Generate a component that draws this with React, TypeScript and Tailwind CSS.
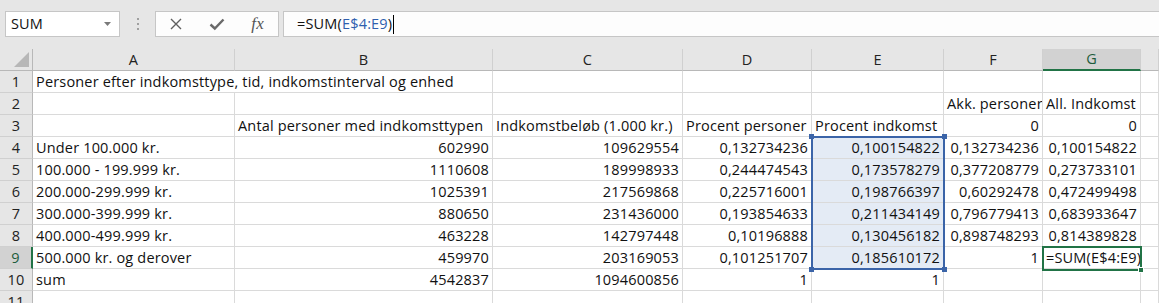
import React from "react";

type C = { t?: string; r?: boolean; span?: number; sel?: boolean; cls?: string };

const title = "Personer efter indkomsttype, tid, indkomstinterval og enhed";

const rows: C[][] = [
  [{ t: title, span: 2 }, {}, {}, {}, {}, {}, {}],
  [{}, {}, {}, {}, {}, { t: "Akk. personer" }, { t: "All. Indkomst" }, {}],
  [
    {},
    { t: "Antal personer med indkomsttypen" },
    { t: "Indkomstbeløb (1.000 kr.)" },
    { t: "Procent personer" },
    { t: "Procent indkomst" },
    { t: "0", r: true },
    { t: "0", r: true },
    {},
  ],
  [
    { t: "Under 100.000 kr." },
    { t: "602990", r: true },
    { t: "109629554", r: true },
    { t: "0,132734236", r: true },
    { t: "0,100154822", r: true, sel: true },
    { t: "0,132734236", r: true },
    { t: "0,100154822", r: true },
    {},
  ],
  [
    { t: "100.000 - 199.999 kr." },
    { t: "1110608", r: true },
    { t: "189998933", r: true },
    { t: "0,244474543", r: true },
    { t: "0,173578279", r: true, sel: true },
    { t: "0,377208779", r: true },
    { t: "0,273733101", r: true },
    {},
  ],
  [
    { t: "200.000-299.999 kr." },
    { t: "1025391", r: true },
    { t: "217569868", r: true },
    { t: "0,225716001", r: true },
    { t: "0,198766397", r: true, sel: true },
    { t: "0,60292478", r: true },
    { t: "0,472499498", r: true },
    {},
  ],
  [
    { t: "300.000-399.999 kr." },
    { t: "880650", r: true },
    { t: "231436000", r: true },
    { t: "0,193854633", r: true },
    { t: "0,211434149", r: true, sel: true },
    { t: "0,796779413", r: true },
    { t: "0,683933647", r: true },
    {},
  ],
  [
    { t: "400.000-499.999 kr." },
    { t: "463228", r: true },
    { t: "142797448", r: true },
    { t: "0,10196888", r: true },
    { t: "0,130456182", r: true, sel: true },
    { t: "0,898748293", r: true },
    { t: "0,814389828", r: true },
    {},
  ],
  [
    { t: "500.000 kr. og derover" },
    { t: "459970", r: true },
    { t: "203169053", r: true },
    { t: "0,101251707", r: true },
    { t: "0,185610172", r: true, sel: true },
    { t: "1", r: true },
    { t: "=SUM(E$4:E9)" },
    {},
  ],
  [
    { t: "sum" },
    { t: "4542837", r: true },
    { t: "1094600856", r: true },
    { t: "1", r: true },
    { t: "1", r: true },
    {},
    {},
    {},
  ],
  [{}, {}, {}, {}, {}, {}, {}, {}],
];

const letters = ["A", "B", "C", "D", "E", "F", "G", ""];

function Cell({ c }: { c: C }) {
  return (
    <div
      className={
        "h-[22px] border-r border-b border-[#dadada] overflow-hidden whitespace-nowrap flex items-end leading-[20px] px-[3px] text-[#111] " +
        (c.r ? "justify-end " : "justify-start ") +
        (c.sel ? "bg-[#e4ebf5] " : "bg-white ") +
        (c.span === 2 ? "col-span-2" : "")
      }
    >
      {c.t}
    </div>
  );
}

export default function App() {
  return (
    <div className="w-[1159px] h-[303px] overflow-hidden bg-[#e6e6e6] font-['Open_Sans',sans-serif] text-[14.5px] tracking-[0.17px]">
      {/* formula bar */}
      <div className="h-[49px] flex items-start pt-[11px]">
        <div className="ml-[5px] w-[115px] h-[26px] border border-[#c6c6c6] bg-white flex items-center pl-[5px] pr-[8px] justify-between text-[#111]">
          <span className="leading-[20px]">SUM</span>
          <svg width="7" height="4" viewBox="0 0 7 4">
            <path d="M0 0 L7 0 L3.5 4 Z" fill="#7a7a7a" />
          </svg>
        </div>
        <div className="w-[35px] h-[26px] flex flex-col items-center justify-center gap-[3px]">
          <span className="w-[2px] h-[2px] bg-[#a0a0a0]" />
          <span className="w-[2px] h-[2px] bg-[#a0a0a0]" />
          <span className="w-[2px] h-[2px] bg-[#a0a0a0]" />
        </div>
        <div className="w-[124px] h-[26px] border border-[#c6c6c6] bg-[#fdfdfd] grid grid-cols-3 items-center justify-items-center">
          <svg width="14" height="14" viewBox="0 0 14 14">
            <path d="M2 2 L12 12 M12 2 L2 12" stroke="#5f5f5f" strokeWidth="1.4" fill="none" />
          </svg>
          <svg width="16" height="14" viewBox="0 0 16 14">
            <path d="M1.5 7.5 L5.8 11.5 L14.5 2.5" stroke="#6a6a6a" strokeWidth="2.4" fill="none" />
          </svg>
          <span className="font-['Liberation_Serif',serif] italic text-[17px] leading-[20px] text-[#555]">fx</span>
        </div>
        <div className="ml-[4px] flex-1 h-[26px] border-y border-l border-[#c6c6c6] bg-[#fdfdfd] flex items-center pl-[13px] text-[#111]">
          <span className="leading-[20px]">=SUM(</span>
          <span className="leading-[20px] text-[#2f5fae]">E$4:E9</span>
          <span className="leading-[20px]">)</span>
          <span className="w-[1px] h-[19px] bg-black ml-[1px]" />
        </div>
      </div>

      {/* sheet */}
      <div className="relative">
        <div className="grid grid-cols-[33px_202px_258px_190px_129px_132px_99px_98px_1fr]">
          {/* corner */}
          <div className="h-[22px] border-r border-b border-[#b8b8b8] bg-[#e6e6e6] flex items-end justify-end pr-[3px] pb-[3px]">
            <svg width="15" height="15" viewBox="0 0 15 15">
              <path d="M15 0 L15 15 L0 15 Z" fill="#b7b7b7" />
            </svg>
          </div>
          {letters.map((l, i) =>
            l === "G" ? (
              <div
                key={i}
                className="h-[22px] border-r border-[#cfcfcf] border-b-2 border-b-[#217346] bg-[#d2d2d2] flex items-center justify-center text-[#1d5c3c] leading-[20px]"
              >
                {l}
              </div>
            ) : (
              <div
                key={i}
                className="h-[22px] border-r border-b border-r-[#d0d0d0] border-b-[#b8b8b8] bg-[#e6e6e6] flex items-center justify-center text-[#222] leading-[20px]"
              >
                {l}
              </div>
            )
          )}
          {rows.map((row, ri) => (
            <React.Fragment key={ri}>
              {ri === 8 ? (
                <div className="h-[22px] border-b border-[#cfcfcf] border-r-2 border-r-[#217346] bg-[#d2d2d2] flex items-end justify-center leading-[20px] text-[#1d5c3c]">
                  {ri + 1}
                </div>
              ) : (
                <div className="h-[22px] border-r border-b border-r-[#b8b8b8] border-b-[#d0d0d0] bg-[#e6e6e6] flex items-end justify-center leading-[20px] text-[#222]">
                  {ri + 1}
                </div>
              )}
              {row.map((c, ci) => (
                <Cell key={ci} c={c} />
              ))}
            </React.Fragment>
          ))}
        </div>

        {/* range reference E4:E9 */}
        <div className="absolute left-[811px] top-[87px] w-[134px] h-[134px] border-2 border-[#3b64a8] pointer-events-none">
          <span className="absolute -left-[4px] -top-[4px] w-[5px] h-[5px] bg-[#3b64a8]" />
          <span className="absolute -right-[4px] -top-[4px] w-[5px] h-[5px] bg-[#3b64a8]" />
          <span className="absolute -left-[4px] -bottom-[4px] w-[5px] h-[5px] bg-[#3b64a8]" />
          <span className="absolute -right-[4px] -bottom-[4px] w-[5px] h-[5px] bg-[#3b64a8]" />
        </div>
        {/* active cell G9 */}
        <div className="absolute left-[1042px] top-[197px] w-[100px] h-[25px] border-2 border-[#217346] pointer-events-none">
          <span className="absolute -right-[4px] -bottom-[4px] w-[6px] h-[6px] bg-[#217346] border border-white" />
        </div>
      </div>
    </div>
  );
}
